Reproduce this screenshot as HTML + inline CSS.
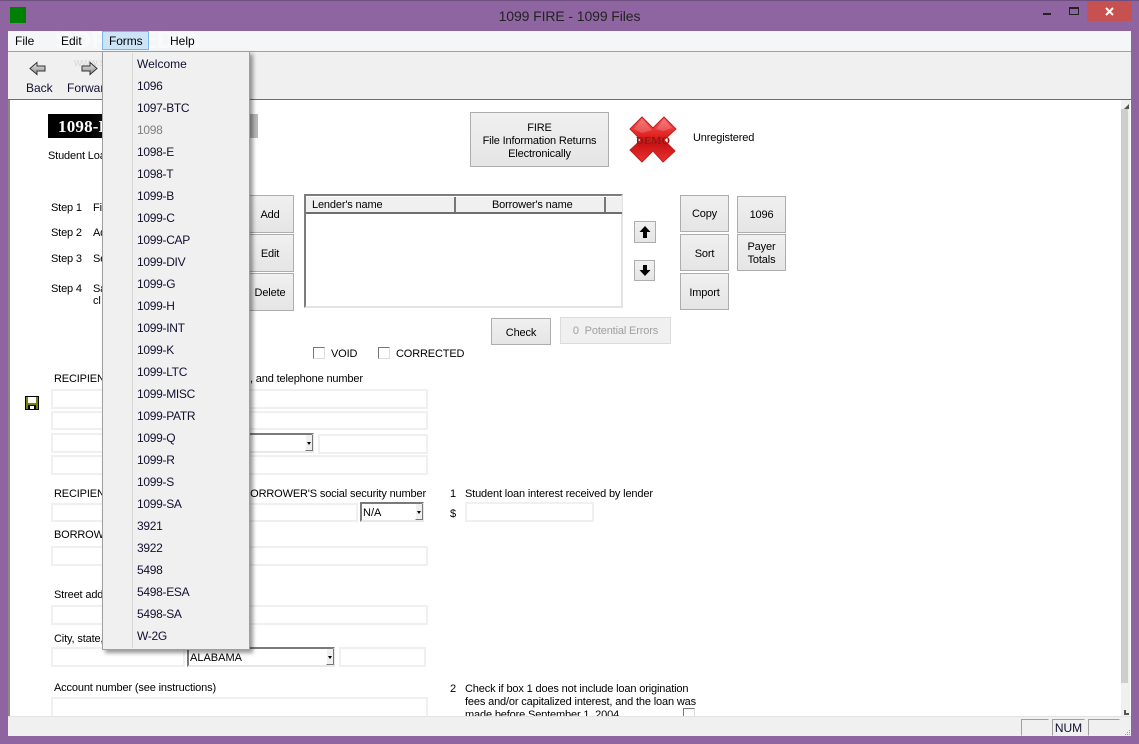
<!DOCTYPE html>
<html><head><meta charset="utf-8"><style>
html,body{margin:0;padding:0}
body{width:1139px;height:744px;overflow:hidden;position:relative;background:#8f65a1;font:11px "Liberation Sans",sans-serif;color:#000}
div,span,svg{position:absolute;box-sizing:border-box}
.t{white-space:nowrap;line-height:16px;letter-spacing:-.15px}
.b{border:1px solid #adadad;background:linear-gradient(#f0f0f0,#e5e5e5);display:flex;align-items:center;justify-content:center;text-align:center;line-height:13px;letter-spacing:-.15px;padding-top:2px}
.p{padding-top:4px}
.f{border:2px solid #f0f0f0;background:#fff}
.c{border:2px solid;border-color:#7a7a7a #e8e8e8 #e8e8e8 #7a7a7a;background:#fff;white-space:nowrap;line-height:19px}
.a{width:8px;background:#f0f0f0;border-left:1px solid #fff;border-right:1px solid #777;border-bottom:1px solid #777}
.a:after{content:"";position:absolute;left:1px;top:7px;border:2px solid transparent;border-top:3px solid #000}
.k{width:12px;height:12px;border:1px solid;border-color:#777 #ddd #ddd #777;background:#fff}
.m{left:137px;white-space:nowrap;line-height:14px;font-size:12px;letter-spacing:-.3px;color:#101030}
</style></head><body>
<div style="left:0;top:0;width:1139px;height:1px;background:#6f4f7f"></div>
<div style="left:10px;top:7px;width:16px;height:16px;background:#008000"></div>
<div class="t" style="left:0;width:1139px;top:8px;text-align:center;font-size:14px;line-height:16px;color:#222;letter-spacing:-.1px">1099 FIRE - 1099 Files</div>
<div style="left:1043px;top:13px;width:8px;height:2px;background:#222"></div>
<div style="left:1069px;top:7px;width:10px;height:8px;border:1px solid #222;border-top-width:2px"></div>
<div style="left:1087px;top:1px;width:45px;height:20px;background:#c75050"></div>
<svg style="left:1105px;top:7px" width="9" height="9"><path d="M1 1L8 8M8 1L1 8" stroke="#fff" stroke-width="2"/></svg>

<div style="left:8px;top:31px;width:1123px;height:705px;background:#f0f0f0;overflow:hidden">
<div style="left:0;top:0;width:1123px;height:20px;background:#f5f6f7"></div>
<div style="left:0;top:20px;width:1123px;height:1px;background:#a0a0a0"></div>
<div style="left:0;top:68px;width:1123px;height:1px;background:#6d6d6d"></div>
<div style="left:0;top:69px;width:1123px;height:616px;background:#fff;border-left:2px solid #8a8a8a"></div>
<div style="left:1113px;top:69px;width:9px;height:616px;background:#f0f0f0"></div>
<div style="left:1113px;top:78px;width:7px;height:574px;background:#cdcdcd"></div>
<div style="left:0;top:685px;width:1123px;height:1px;background:#e3e3e3"></div>
</div>
<svg style="left:1124px;top:104px" width="6" height="5"><path d="M0 5L5 0V5Z" fill="#555"/></svg>
<svg style="left:1124px;top:710px" width="6" height="5"><path d="M0 0H2V3H5V5H0Z" fill="#555"/></svg>
<svg style="left:1124px;top:729px" width="7" height="7"><path d="M5 1h1v1h-1zM3 3h1v1h-1zM5 3h1v1h-1zM1 5h1v1h-1zM3 5h1v1h-1zM5 5h1v1h-1z" fill="#999"/></svg>

<div class="t" style="left:55px;top:27px;font-size:24px;line-height:28px;font-weight:bold;color:#fff;opacity:.45;letter-spacing:1px">SOFTPEDIA</div>
<div class="t" style="left:74px;top:55px;color:#d8d8d8;font-size:11px">www.softpedia.com</div>
<div class="t" style="left:15px;top:33px;font-size:12px;letter-spacing:0">File</div>
<div class="t" style="left:61px;top:33px;font-size:12px;letter-spacing:0">Edit</div>
<div style="left:102px;top:31px;width:47px;height:19px;background:#cce4f7;border:1px solid #7db7e8"></div>
<div class="t" style="left:109px;top:33px;font-size:12px;letter-spacing:-.1px">Forms</div>
<div class="t" style="left:170px;top:33px;font-size:12px;letter-spacing:0">Help</div>

<svg style="left:29px;top:61px" width="18" height="15" viewBox="0 0 18 15"><defs><linearGradient id="g" x1="0" y1="0" x2="0" y2="1"><stop offset="0" stop-color="#eee"/><stop offset="1" stop-color="#888"/></linearGradient></defs><path d="M1 7.500L8 1.500V5H16V10H8V13.500Z" fill="url(#g)" stroke="#333"/></svg>
<svg style="left:80px;top:61px" width="18" height="15" viewBox="0 0 18 15"><path d="M17 7.500L10 1.500V5H2V10H10V13.500Z" fill="url(#g)" stroke="#333"/></svg>
<div class="t" style="left:26px;top:80px;color:#101030;font-size:12px;letter-spacing:0">Back</div>
<div class="t" style="left:67px;top:80px;color:#101030;font-size:12px;letter-spacing:0">Forward</div>

<div class="t" style="left:48px;top:114px;width:210px;height:24px;background:linear-gradient(90deg,#000 0,#000 20%,#bbb 100%);color:#fff;font:bold 17px/25px 'Liberation Serif',serif;padding-left:10px;letter-spacing:.2px;position:absolute">1098-E</div>
<div class="t" style="left:48px;top:148px">Student Loan</div>
<div class="t" style="left:51px;top:200px">Step 1</div><div class="t" style="left:93px;top:200px">Fi</div>
<div class="t" style="left:51px;top:225px">Step 2</div><div class="t" style="left:93px;top:225px">Ad</div>
<div class="t" style="left:51px;top:251px">Step 3</div><div class="t" style="left:93px;top:251px">Se</div>
<div class="t" style="left:51px;top:281px">Step 4</div><div class="t" style="left:93px;top:281px">Sa</div><div class="t" style="left:93px;top:293px">cl</div>

<div class="b p" style="left:470px;top:112px;width:139px;height:55px">FIRE<br>File Information Returns<br>Electronically</div>
<svg style="left:629px;top:116px" width="48" height="47" viewBox="0 0 48 47"><defs><linearGradient id="r" x1="0" y1="0" x2="0" y2="1"><stop offset="0" stop-color="#f76060"/><stop offset=".42" stop-color="#e02020"/><stop offset=".6" stop-color="#c81414"/><stop offset="1" stop-color="#ee3030"/></linearGradient></defs><path d="M13 1L24 12L35 1L47 13L35 24L46 35L34 46L24 35L13 46L1 34L12 24L1 13Z" fill="url(#r)" stroke="#c02020"/><path d="M13 3L23 14L13 17L5 13ZM35 3L43 12L34 15L27 13Z" fill="#fff" opacity=".18"/><text x="24" y="28" text-anchor="middle" font-family="Liberation Serif,serif" font-weight="bold" font-size="11" fill="#8f1616">DEMO</text></svg>
<div class="t" style="left:693px;top:130px">Unregistered</div>

<div class="b" style="left:240px;top:195px;width:54px;height:38px;padding-left:6px">Add</div>
<div class="b" style="left:240px;top:234px;width:54px;height:38px;padding-left:6px">Edit</div>
<div class="b" style="left:240px;top:273px;width:54px;height:38px;padding-left:6px">Delete</div>

<div style="left:304px;top:194px;width:319px;height:114px;border:2px solid;border-color:#7d7d7d #e3e3e3 #e3e3e3 #7d7d7d;background:#fff"></div>
<div style="left:306px;top:197px;width:316px;height:17px;background:#f0f0f0;border-bottom:2px solid #6d6d6d"></div>
<div style="left:454px;top:197px;width:2px;height:15px;background:#777"></div>
<div style="left:604px;top:197px;width:2px;height:15px;background:#777"></div>
<div class="t" style="left:312px;top:197px">Lender's name</div>
<div class="t" style="left:492px;top:197px">Borrower's name</div>

<div class="b" style="left:634px;top:221px;width:22px;height:22px"></div>
<svg style="left:639px;top:225px" width="12" height="14"><path d="M6 1L11.500 7H8V13H4V7H.5Z" fill="#000"/></svg>
<div class="b" style="left:634px;top:260px;width:21px;height:21px"></div>
<svg style="left:639px;top:264px" width="12" height="13"><path d="M4 1H8V6H11.500L6 12L.5 6H4Z" fill="#000"/></svg>

<div class="b" style="left:680px;top:195px;width:49px;height:37px">Copy</div>
<div class="b p" style="left:680px;top:234px;width:49px;height:37px">Sort</div>
<div class="b p" style="left:680px;top:273px;width:49px;height:37px">Import</div>
<div class="b" style="left:737px;top:196px;width:49px;height:37px">1096</div>
<div class="b" style="left:737px;top:234px;width:49px;height:37px">Payer<br>Totals</div>
<div class="b p" style="left:491px;top:318px;width:60px;height:27px">Check</div>
<div class="b p" style="left:560px;top:317px;width:111px;height:27px;border-color:#dcdcdc;background:#f0f0f0;color:#a0a0a0;padding-top:2px">0&nbsp; Potential Errors</div>

<div class="k" style="left:313px;top:347px"></div><div class="t" style="left:331px;top:346px">VOID</div>
<div class="k" style="left:378px;top:347px"></div><div class="t" style="left:396px;top:346px">CORRECTED</div>

<svg style="left:25px;top:396px" width="14" height="14"><path d="M0 0H14V14H0Z" fill="#000"/><path d="M1 1H13V13H1Z" fill="#808000"/><path d="M3 1H11V7H3Z" fill="#fff"/><path d="M3 9H11V14H3Z" fill="#000"/><path d="M5 10H9V13H5Z" fill="#fff"/></svg>

<div class="t" style="left:54px;top:371px">RECIPIENT'S/LENDER'S name, address, and telephone number</div>
<div class="f" style="left:51px;top:389px;width:377px;height:20px"></div>
<div class="f" style="left:51px;top:411px;width:377px;height:19px"></div>
<div class="f" style="left:51px;top:433px;width:137px;height:20px"></div>
<div class="c" style="left:190px;top:433px;width:124px;height:20px"></div>
<div class="a" style="left:305px;top:435px;height:16px"></div>
<div class="f" style="left:318px;top:434px;width:110px;height:20px"></div>
<div class="f" style="left:51px;top:455px;width:377px;height:20px"></div>

<div class="t" style="left:54px;top:486px">RECIPIENT'S federal id</div>
<div class="t" style="left:243px;top:486px">BORROWER'S social security number</div>
<div class="f" style="left:51px;top:503px;width:307px;height:19px"></div>
<div class="c" style="left:360px;top:502px;width:64px;height:20px;padding-left:1px">N/A</div>
<div class="a" style="left:415px;top:504px;height:16px"></div>

<div class="t" style="left:54px;top:527px">BORROWER'S name</div>
<div class="f" style="left:51px;top:546px;width:377px;height:20px"></div>
<div class="t" style="left:54px;top:587px">Street address</div>
<div class="f" style="left:51px;top:605px;width:377px;height:20px"></div>
<div class="t" style="left:54px;top:631px">City, state, and ZIP code</div>
<div class="f" style="left:51px;top:647px;width:134px;height:20px"></div>
<div class="c" style="left:187px;top:647px;width:148px;height:20px;padding-left:1px">ALABAMA</div>
<div class="a" style="left:326px;top:649px;height:16px"></div>
<div class="f" style="left:339px;top:647px;width:87px;height:20px"></div>
<div class="t" style="left:54px;top:680px">Account number (see instructions)</div>
<div class="f" style="left:51px;top:697px;width:377px;height:19px;border-bottom:0"></div>

<div class="t" style="left:450px;top:486px">1</div>
<div class="t" style="left:465px;top:486px">Student loan interest received by lender</div>
<div class="t" style="left:450px;top:506px">$</div>
<div class="f" style="left:465px;top:502px;width:129px;height:20px"></div>
<div style="left:440px;top:675px;width:300px;height:41px;overflow:hidden">
<div class="t" style="left:10px;top:6px">2</div>
<div class="t" style="left:25px;top:6px">Check if box 1 does not include loan origination</div>
<div class="t" style="left:25px;top:19px">fees and/or capitalized interest, and the loan was</div>
<div class="t" style="left:25px;top:32px">made before September 1, 2004</div>
<div class="k" style="left:243px;top:33px"></div>
</div>

<div style="left:1021px;top:719px;width:28px;height:17px;border:1px solid;border-color:#a0a0a0 #f0f0f0 #f0f0f0 #a0a0a0"></div>
<div style="left:1052px;top:719px;width:33px;height:17px;border:1px solid;border-color:#a0a0a0 #f0f0f0 #f0f0f0 #a0a0a0;text-align:center;line-height:16px;font-size:12px;color:#101030">NUM</div>
<div style="left:1088px;top:719px;width:32px;height:17px;border:1px solid;border-color:#a0a0a0 #f0f0f0 #f0f0f0 #a0a0a0"></div>

<div style="left:102px;top:51px;width:148px;height:599px;background:#f0f0f0;border:1px solid #a0a0a0;box-shadow:3px 3px 4px rgba(0,0,0,.4)"></div>
<div style="left:132px;top:53px;width:1px;height:595px;background:#d7d7d7"></div>
<div class="m" style="top:57px;letter-spacing:0">Welcome</div>
<div class="m" style="top:79px">1096</div>
<div class="m" style="top:101px">1097-BTC</div>
<div class="m" style="top:123px;color:#808080">1098</div>
<div class="m" style="top:145px">1098-E</div>
<div class="m" style="top:167px">1098-T</div>
<div class="m" style="top:189px">1099-B</div>
<div class="m" style="top:211px">1099-C</div>
<div class="m" style="top:233px">1099-CAP</div>
<div class="m" style="top:255px">1099-DIV</div>
<div class="m" style="top:277px">1099-G</div>
<div class="m" style="top:299px">1099-H</div>
<div class="m" style="top:321px">1099-INT</div>
<div class="m" style="top:343px">1099-K</div>
<div class="m" style="top:365px">1099-LTC</div>
<div class="m" style="top:387px">1099-MISC</div>
<div class="m" style="top:409px">1099-PATR</div>
<div class="m" style="top:431px">1099-Q</div>
<div class="m" style="top:453px">1099-R</div>
<div class="m" style="top:475px">1099-S</div>
<div class="m" style="top:497px">1099-SA</div>
<div class="m" style="top:519px">3921</div>
<div class="m" style="top:541px">3922</div>
<div class="m" style="top:563px">5498</div>
<div class="m" style="top:585px">5498-ESA</div>
<div class="m" style="top:607px">5498-SA</div>
<div class="m" style="top:629px">W-2G</div>
</body></html>
